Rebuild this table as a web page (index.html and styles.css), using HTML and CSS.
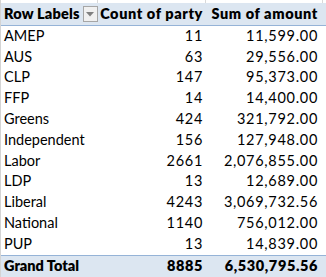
FILE: index.html
```html
<!DOCTYPE html>
<html>
<head>
<meta charset="utf-8">
<link rel="stylesheet" href="styles.css">
</head>
<body>
<div class="sheet">
  <div class="row top">
    <div class="cell"></div><div class="cell"></div><div class="cell"></div>
  </div>
  <div class="row head">
    <div class="cell label">Row Labels <span class="dd"><svg width="8" height="5" viewBox="0 0 8 5"><path d="M0 0H8L4 4.5Z" fill="#7f7f7f"/></svg></span></div>
    <div class="cell num">Count of party</div>
    <div class="cell num c3">Sum of amount</div>
  </div>
  <div class="row"><div class="cell label">AMEP</div><div class="cell num">11</div><div class="cell num c3">11,599.00</div></div>
  <div class="row"><div class="cell label">AUS</div><div class="cell num">63</div><div class="cell num c3">29,556.00</div></div>
  <div class="row"><div class="cell label">CLP</div><div class="cell num">147</div><div class="cell num c3">95,373.00</div></div>
  <div class="row"><div class="cell label">FFP</div><div class="cell num">14</div><div class="cell num c3">14,400.00</div></div>
  <div class="row"><div class="cell label">Greens</div><div class="cell num">424</div><div class="cell num c3">321,792.00</div></div>
  <div class="row"><div class="cell label">Independent</div><div class="cell num">156</div><div class="cell num c3">127,948.00</div></div>
  <div class="row"><div class="cell label">Labor</div><div class="cell num">2661</div><div class="cell num c3">2,076,855.00</div></div>
  <div class="row"><div class="cell label">LDP</div><div class="cell num">13</div><div class="cell num c3">12,689.00</div></div>
  <div class="row"><div class="cell label">Liberal</div><div class="cell num">4243</div><div class="cell num c3">3,069,732.56</div></div>
  <div class="row"><div class="cell label">National</div><div class="cell num">1140</div><div class="cell num c3">756,012.00</div></div>
  <div class="row"><div class="cell label">PUP</div><div class="cell num">13</div><div class="cell num c3">14,839.00</div></div>
  <div class="row total"><div class="cell label">Grand Total</div><div class="cell num">8885</div><div class="cell num c3">6,530,795.56</div></div>
</div>
</body>
</html>
```
FILE: styles.css
```css
html, body {
  margin: 0;
  padding: 0;
  background: #fff;
}
.sheet {
  width: 326px;
  height: 277px;
  overflow: hidden;
  font-family: Lato, "Open Sans", sans-serif;
  font-size: 14.5px;
  color: #000;
  border-left: 1px solid #d4d4d4;
  box-sizing: border-box;
}
.row {
  display: grid;
  grid-template-columns: 97px 108px 117px;
  height: 20.8px;
}
.cell {
  display: flex;
  align-items: flex-end;
  padding: 0 0 3px 3px;
  white-space: nowrap;
  box-sizing: border-box;
  overflow: hidden;
}
.num {
  justify-content: flex-end;
  padding: 0 3px 3px 0;
  letter-spacing: 0.7px;
}
.c3 {
  padding-right: 5px;
}
.top {
  height: 3px;
}
.top .cell {
  border-right: 1px solid #d9d9d9;
  padding: 0;
}
.head {
  height: 23px;
  background: #dce6f1;
  border-bottom: 1px solid #95b3d7;
  font-weight: 800;
  box-sizing: border-box;
}
.head .cell {
  padding-bottom: 3px;
}
.head .label {
  padding-left: 3px;
  letter-spacing: 0.2px;
}
.head .num {
  letter-spacing: 0.6px;
  padding-right: 3px;
}
.head .c3 {
  padding-right: 5px;
}
.dd {
  display: inline-flex;
  align-items: center;
  justify-content: center;
  width: 16px;
  height: 16px;
  margin-left: 3px;
  border: 1px solid #a6a6a6;
  background: #f0f0f0;
  box-sizing: border-box;
  letter-spacing: 0;
}
.total {
  height: 22px;
  background: #dce6f1;
  border-top: 1px solid #95b3d7;
  font-weight: 800;
  box-sizing: border-box;
}
.total .num {
  letter-spacing: 0.6px;
}
```
